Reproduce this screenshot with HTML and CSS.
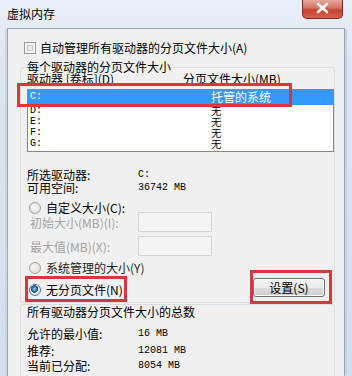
FILE: index.html
```html
<!DOCTYPE html>
<html lang="zh-CN">
<head>
<meta charset="utf-8">
<link rel="stylesheet" href="styles.css">
</head>
<body>
<div class="window">
  <div class="titlebar">
    <span class="title">虚拟内存</span>
    <div class="close">
      <svg width="41" height="19" viewBox="0 0 41 19"><path d="M16 5 L25 13 M25 5 L16 13" stroke="#fff" stroke-width="2.6" stroke-linecap="round"/></svg>
    </div>
  </div>
  <div class="client">
    <div class="check-row"><span class="checkbox"></span><span>自动管理所有驱动器的分页文件大小(A)</span></div>
    <fieldset class="group g1">
      <legend>每个驱动器的分页文件大小</legend>
      <div class="list-head"><span class="c1">驱动器 [卷标](D)</span><span class="c2">分页文件大小(MB)</span></div>
      <div class="list">
        <div class="row sel"><span class="d1">C:</span><span class="d2">托管的系统</span></div>
        <div class="row"><span class="d1">D:</span><span class="d2">无</span></div>
        <div class="row"><span class="d1">E:</span><span class="d2">无</span></div>
        <div class="row"><span class="d1">F:</span><span class="d2">无</span></div>
        <div class="row"><span class="d1">G:</span><span class="d2">无</span></div>
      </div>
      <div class="info first"><span class="k">所选驱动器:</span><span class="v">C:</span></div>
      <div class="info"><span class="k">可用空间:</span><span class="v">36742 MB</span></div>
      <div class="radio-row custom"><span class="radio"></span><span>自定义大小(C):</span></div>
      <div class="input-row r1"><span class="k dis">初始大小(MB)(I):</span><span class="input"></span></div>
      <div class="input-row r2"><span class="k dis">最大值(MB)(X):</span><span class="input"></span></div>
      <div class="radio-row sys"><span class="radio"></span><span>系统管理的大小(Y)</span></div>
      <div class="bottom-row">
        <div class="radio-row none"><span class="radio on"></span><span>无分页文件(N)</span></div>
        <div class="button">设置(S)</div>
      </div>
    </fieldset>
    <div class="group2">
      <div class="g2-title">所有驱动器分页文件大小的总数</div>
      <div class="info t1"><span class="k">允许的最小值:</span><span class="v">16 MB</span></div>
      <div class="info t2"><span class="k">推荐:</span><span class="v">12081 MB</span></div>
      <div class="info t3"><span class="k">当前已分配:</span><span class="v">8054 MB</span></div>
    </div>
  </div>
  <div class="mark m1"></div>
  <div class="mark m2"></div>
  <div class="mark m3"></div>
</div>
</body>
</html>
```

FILE: styles.css
```css
* { box-sizing: border-box; }
html, body { margin: 0; padding: 0; }
body {
  width: 352px;
  height: 376px;
  overflow: hidden;
  background: #dfe8f2;
  font-family: "Noto Sans CJK SC", "Noto Sans", sans-serif;
  font-size: 12px;
  color: #000;
}
.window {
  position: relative;
  width: 352px;
  height: 376px;
  background: linear-gradient(#e9eff6, #dde6f0 60px, #d4dfec);
}
.titlebar {
  height: 28px;
  display: flex;
  align-items: flex-start;
  padding-left: 7px;
}
.title {
  margin-top: 7px;
  line-height: 14px;
  font-size: 12px;
  color: #000;
}
.close {
  margin-left: auto;
  margin-right: 9px;
  width: 41px;
  height: 19px;
  border: 1px solid #7a2a22;
  border-top: none;
  border-radius: 0 0 5px 5px;
  background: linear-gradient(#e9a99c, #d3705f 45%, #c24431 55%, #d4624c);
  display: flex;
}
.close svg { margin: -1px; }
.client {
  margin-left: 7px;
  width: 338px;
  height: 348px;
  border: 1px solid #98a6b8;
  border-bottom: none;
  background: #f0f0f0;
  padding-left: 12px;
  display: flex;
  flex-direction: column;
  box-shadow: -3px 0 0 -1px #c7d5e6, 3px 0 0 -1px #c2d2e6;
}
.check-row {
  margin-top: 12px;
  height: 14px;
  display: flex;
  align-items: center;
  line-height: 14px;
  padding-left: 4px;
}
.checkbox {
  width: 12px;
  height: 12px;
  border: 1px solid #9a9a9a;
  background: linear-gradient(135deg, #dcdcdc, #f6f6f6);
  box-shadow: inset 0 0 0 2px #f4f4f4, inset 0 0 0 3px #c8c8c8;
  margin-right: 4px;
}
.group {
  margin: 0;
  padding: 0 0 0 6px;
  border: 1px solid #d5dfe5;
  border-radius: 3px;
  width: 315px;
  min-width: 0;
}
.group legend {
  padding: 0 1px;
  margin-left: -1px;
  line-height: 12px;
  height: 12px;
}
.g1 { margin-top: 6px; height: 242px; }
.list-head {
  height: 11px;
  line-height: 11px;
  display: flex;
  white-space: nowrap;
}
.list-head .c1 { width: 156px; }
.list {
  margin-top: 5px;
  width: 307px;
  border: 1px solid #828790;
  background: #fff;
  padding-bottom: 2px;
}
.row {
  height: 11px;
  line-height: 11px;
  display: flex;
  padding-left: 2px;
  font-size: 10.5px;
}
.row.sel {
  height: 15px;
  line-height: 13px;
  background: #3399ff;
  color: #fff;
  font-size: 12px;
}
.row .d1 { width: 181px; font-family: "Liberation Mono", monospace; font-size: 10px; }
.info {
  height: 13px;
  line-height: 13px;
  display: flex;
  white-space: nowrap;
}
.info.first { margin-top: 16px; }
.k { width: 111px; }
.v { font-family: "Liberation Mono", monospace; font-size: 10px; }
.radio-row {
  display: flex;
  align-items: center;
  height: 12px;
  line-height: 12px;
  padding-left: 2px;
  white-space: nowrap;
}
.radio {
  width: 12px;
  height: 12px;
  border-radius: 50%;
  border: 1px solid #a0a0a0;
  background: radial-gradient(circle at 40% 40%, #f8f8f8, #d8d8d8);
  margin-right: 5px;
  flex: none;
}
.radio.on {
  border-color: #5a6f88;
  background: radial-gradient(circle at 45% 40%, #9fd0f0 0, #2d6ea8 2.5px, #1d4e80 3.5px, #f4f4f4 4px, #dedede);
}
.custom { margin-top: 8px; }
.input-row {
  display: flex;
  align-items: center;
  height: 20px;
  white-space: nowrap;
}
.input-row .k { padding-left: 3px; }
.r1 { margin-top: -2px; }
.r2 { margin-top: 4px; }
.dis { color: #a3a3a3; }
.input {
  width: 74px;
  height: 20px;
  border: 1px solid #d3d3d3;
  border-radius: 1px;
  background: #f4f4f4;
}
.sys { margin-top: 6px; color: #222; }
.bottom-row {
  margin-top: 4px;
  height: 19px;
  display: flex;
  align-items: center;
}
.none { margin-top: 4px; }
.button {
  margin-left: auto;
  margin-right: 9px;
  width: 72px;
  height: 19px;
  line-height: 17px;
  text-align: center;
  border: 1px solid #707070;
  border-radius: 3px;
  background: linear-gradient(#f2f2f2, #ebebeb 50%, #dddddd 51%, #cfcfcf);
  box-shadow: inset 0 0 0 1px #fcfcfc;
}
.group2 {
  margin-top: 1px;
  flex: 1;
  width: 315px;
  border: 1px solid #d5dfe5;
  border-bottom: none;
  border-radius: 3px 3px 0 0;
  padding-left: 6px;
}
.g2-title {
  margin-top: 1px;
  height: 12px;
  line-height: 12px;
}
.t1 { margin-top: 9px; }
.t2 { margin-top: 4px; }
.t3 { margin-top: 2px; }
.mark {
  position: absolute;
  border: 3px solid #d8383b;
}
.m1 { left: 17px; top: 83px; width: 275px; height: 24px; }
.m2 { left: 25px; top: 276px; width: 102px; height: 26px; }
.m3 { left: 250px; top: 270px; width: 82px; height: 34px; }
```
